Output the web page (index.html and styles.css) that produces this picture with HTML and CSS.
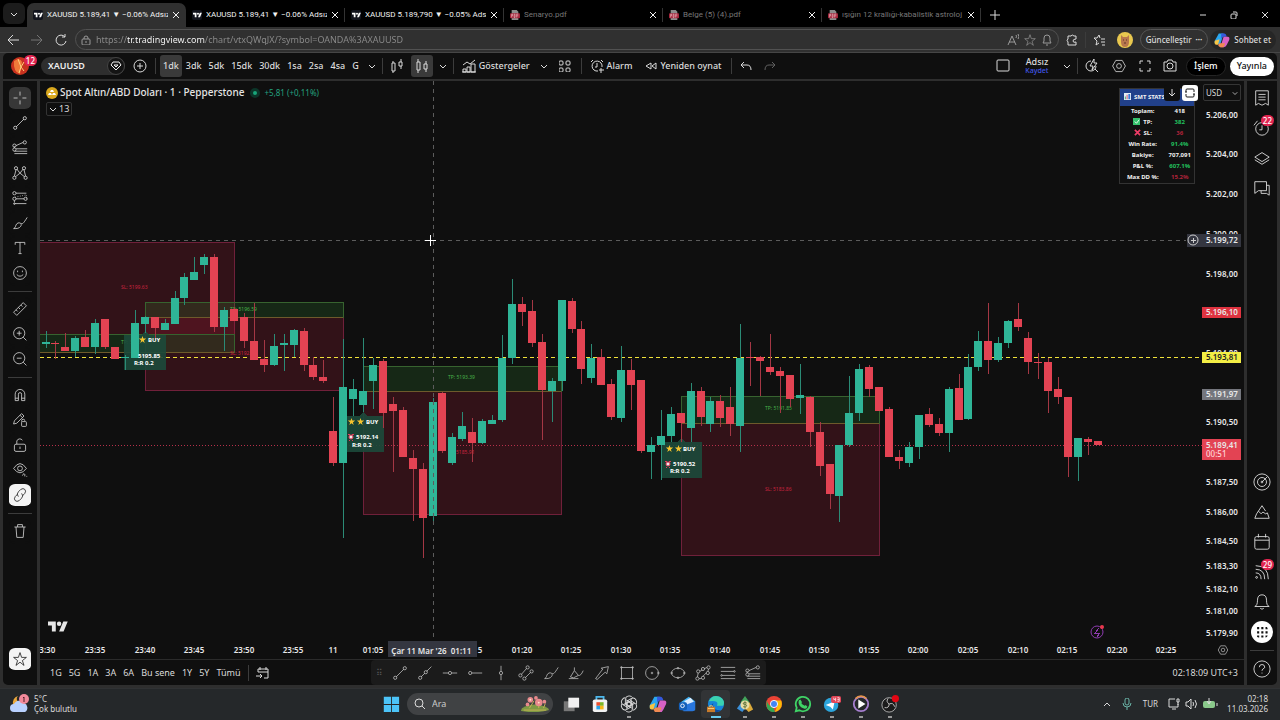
FILE: index.html
```html
<!DOCTYPE html>
<html lang="tr">
<head>
    <meta charset="utf-8">
    <meta name="viewport" content="width=device-width, initial-scale=1.0">
    <title>XAUUSD 5.189,41 ▼ −0.06% Adsız</title>
    <link rel="stylesheet" href="styles.css">
</head>
<body>
    <svg class="sprite" aria-hidden="true">
        <symbol id="tv" viewBox="0 0 36 22"><path fill="currentColor" d="M14 20H7V9H0V2h14zM28 20h-8l7.500-18h8z"/><circle fill="currentColor" cx="20" cy="6" r="4"/></symbol>
        <symbol id="down" viewBox="0 0 8 8"><path d="M1 3l3 3 3-3"/></symbol>
        <symbol id="x" viewBox="0 0 8 8"><path d="M1 1l6 6M7 1L1 7"/></symbol>
        <symbol id="pdf" viewBox="0 0 12 12"><path fill="#8c8c8c" d="M2 0h6l2 2v10H2z"/><rect fill="#a3263c" y="4" width="12" height="6" rx="1"/><path fill="none" stroke="#e0a0a8" d="M2 9V5h1v2H2M5 5v4h1V5zM8 9V5h2M8 7h2"/></symbol>
        <symbol id="star" viewBox="0 0 20 20"><path d="M10 2l2 6h6l-5 4 2 6-5-4-5 4 2-6-5-4h6z"/></symbol>
        <symbol id="hex" viewBox="0 0 20 20"><path d="M6 3h8l4 7-4 7H6l-4-7z"/><circle cx="10" cy="10" r="3"/></symbol>
        <symbol id="brush" viewBox="0 0 20 20"><path d="M2 17c3-1 2-4 4-6 3-3 7 0 5 3-2 3-5 3-9 3zM11 10c2 2 3 1 8-7"/></symbol>
        <symbol id="line" viewBox="0 0 20 20"><circle cx="4" cy="16" r="2"/><circle cx="16" cy="4" r="2"/><path d="M5 15L15 5"/></symbol>
        <symbol id="fan" viewBox="0 0 20 20"><path d="M5 11h14M3 14h16M3 17h16M5 7l9-4M3 8v2"/><circle cx="3" cy="7" r="2"/><circle cx="16" cy="3" r="2"/><circle cx="3" cy="12" r="2"/></symbol>
        <symbol id="copilot" viewBox="0 0 20 20"><path fill="#2aa7f0" d="M6 2h6l-4 13H3q-3 0-2-4z"/><path fill="#f6c444" d="M1 11l6-2-2 7H3q-3 0-2-5z"/><path fill="#3558dd" d="M9 2h4q2 0 3 4h-4q-2 0-3 3z"/><path fill="#d861c4" d="M12 6h5q3 0 2 4l-3 6q-1 3-4 3H8z"/><path fill="#f08a52" d="M7 14h7l-2 5H8q-2 0-3-3z"/></symbol>
    </svg>

    <div class="tabs">
        <button class="tab-menu" aria-label="Sekme menüsü"><svg class="s8"><use href="#down"/></svg></button>
        <div class="tab active"><span class="fav"><svg><use href="#tv"/></svg></span><a href="#">XAUUSD 5.189,41 ▼ −0.06% Adsız</a><button aria-label="Kapat"><svg class="s8"><use href="#x"/></svg></button></div>
        <div class="tab"><span class="fav"><svg><use href="#tv"/></svg></span><a href="#">XAUUSD 5.189,41 ▼ −0.06% Adsız</a><button aria-label="Kapat"><svg class="s8"><use href="#x"/></svg></button></div>
        <div class="tab"><span class="fav"><svg><use href="#tv"/></svg></span><a href="#">XAUUSD 5.189,790 ▼ −0.05% Adsız</a><button aria-label="Kapat"><svg class="s8"><use href="#x"/></svg></button></div>
        <div class="tab pdf"><svg class="s10"><use href="#pdf"/></svg><a href="#">Senaryo.pdf</a><button aria-label="Kapat"><svg class="s8"><use href="#x"/></svg></button></div>
        <div class="tab pdf"><svg class="s10"><use href="#pdf"/></svg><a href="#">Belge (5) (4).pdf</a><button aria-label="Kapat"><svg class="s8"><use href="#x"/></svg></button></div>
        <div class="tab pdf"><svg class="s10"><use href="#pdf"/></svg><a href="#">ışığın 12 krallığı-kabalistik astroloj</a><button aria-label="Kapat"><svg class="s8"><use href="#x"/></svg></button></div>
        <button class="new-tab" aria-label="Yeni sekme"><svg viewBox="0 0 10 10"><path d="M5 0v10M0 5h10"/></svg></button>
        <div class="window-buttons">
            <button aria-label="Simge durumuna küçült"><svg class="s8" viewBox="0 0 8 8"><path d="M1 4h6"/></svg></button>
            <button aria-label="Önceki boyut"><svg class="s8" viewBox="0 0 8 8"><rect x="1" y="3" width="5" height="5" rx="1"/><path d="M3 1h3q1 0 1 1v3"/></svg></button>
            <button aria-label="Pencereyi kapat"><svg class="s8"><use href="#x"/></svg></button>
        </div>
    </div>

    <div class="address-bar">
        <div class="nav">
            <button aria-label="Geri"><svg viewBox="0 0 12 12"><path d="M12 6H1M6 1L1 6l5 5"/></svg></button>
            <button class="dim" aria-label="İleri"><svg viewBox="0 0 12 12"><path d="M0 6h11M6 1l5 5-5 5"/></svg></button>
            <button aria-label="Yenile"><svg viewBox="0 0 12 12"><path d="M10 3a5 5 0 1 0 1 4M10 0v3H7"/></svg></button>
        </div>
        <div class="url">
            <svg class="s10" viewBox="0 0 10 10"><rect x="1" y="4" width="8" height="6" rx="1"/><path d="M3 4V3a2 2 0 0 1 4 0v1M5 6v2"/></svg>
            <input class="url-input" type="text" aria-label="Adres" value="https://tr.tradingview.com/chart/vtxQWqJX/?symbol=OANDA%3AXAUUSD">
            <button aria-label="Sesli oku"><svg viewBox="0 0 12 12"><path d="M1 11l4-9 4 9M2 8h6M9 1q1 1 0 3M11 0q2 3 0 5"/></svg></button>
            <button aria-label="Sık kullanılanlara ekle"><svg viewBox="1 1 18 18"><use href="#star" width="20" height="20"/></svg></button>
            <button aria-label="Bildirimler"><svg viewBox="0 0 12 12"><path d="M2 9l1-2V4a3 3 0 0 1 6 0v3l1 2zM5 11h2"/></svg></button>
        </div>
        <button aria-label="Uzantılar"><svg viewBox="0 0 12 12"><path d="M2 2h3q1-2 3 0h2v3q-3 0-3 2t3 1v3H2V8q-2-2 0-3z"/></svg></button>
        <i class="sep"></i>
        <button aria-label="Sık kullanılanlar"><svg viewBox="0 0 12 12"><path d="M6 9l-3 2 1-4-3-3h3l2-3 1 3M8 5h4M8 8h4M9 11h3"/></svg></button>
        <button class="profile" aria-label="Profil"><svg viewBox="0 0 16 16"><circle cx="8" cy="8" r="8" fill="#e9c84f"/><path fill="#b8774d" d="M4 3l2 2h4l2-2v7q0 5-4 5t-4-5z"/><path stroke="#5d382b" d="M6 8h1M9 8h1M7 11h2"/></svg></button>
        <button class="update">Güncelleştir <span>•••</span></button>
        <button class="chat"><svg class="s16"><use href="#copilot"/></svg>Sohbet et</button>
    </div>

    <main class="app">
        <header class="top-bar">
            <button class="avatar" aria-label="Hesap"><svg viewBox="0 0 20 20"><circle cx="10" cy="10" r="9" fill="#c8321f"/><path fill="#ef7a3a" d="M4 5q6-4 8 1l-2 12q-7-2-6-13z"/><path stroke="#ffd27a" d="M8 3l3 8-2 6M14 6l-3 5 3 4"/></svg><b class="badge">12</b></button>
            <button class="symbol">XAUUSD<span><svg class="s12" viewBox="0 0 12 12"><path d="M3 2h6l2 3-5 5-5-5zM4 5l2 2 2-2z"/></svg></span></button>
            <button class="ic w30" aria-label="Karşılaştır"><svg class="s14" viewBox="0 0 14 14"><circle cx="7" cy="7" r="6"/><path d="M7 4v6M4 7h6"/></svg></button>
            <i class="sep"></i>
            <div class="intervals">
                <button class="active">1dk</button><button>3dk</button><button>5dk</button><button>15dk</button><button>30dk</button><button>1sa</button><button>2sa</button><button>4sa</button><button>G</button>
            </div>
            <button class="ic w20" aria-label="Zaman aralıkları"><svg class="s8"><use href="#down"/></svg></button>
            <i class="sep"></i>
            <button class="ic w28" aria-label="Mumlar"><svg class="s14" viewBox="0 0 14 14"><path d="M2 4h3v8H2zM3 2v2M3 12v2M9 3h3v4H9zM11 0v3M11 7v3"/></svg></button>
            <button class="ic w22 active" aria-label="Grafik tipi"><svg class="s14" viewBox="0 0 14 14"><path d="M2 3h3v8H2zM3 0v3M3 11v3M9 5h3v5H9zM11 2v3M11 10v3"/></svg></button>
            <button class="ic w20" aria-label="Grafik tipleri"><svg class="s8"><use href="#down"/></svg></button>
            <i class="sep"></i>
            <button class="with-text"><svg class="s14" viewBox="0 0 14 14"><path d="M1 6l4-3 3 2 5-4M1 13v-3h3v3zM5 13V8h3v5zM9 13V5h4v8zM0 13h14"/></svg>Göstergeler</button>
            <button class="ic w28" aria-label="Favori göstergeler"><svg class="s8"><use href="#down"/></svg></button>
            <button class="ic w14" aria-label="Şablonlar"><svg class="s12" viewBox="0 0 12 12"><rect x="0" y="1" width="4" height="4" rx="1"/><rect x="7" y="1" width="4" height="4" rx="1"/><rect x="0" y="8" width="4" height="4" rx="1"/><rect x="7" y="8" width="4" height="4" rx="1"/></svg></button>
            <i class="sep wide"></i>
            <button class="with-text"><svg class="s14" viewBox="0 0 14 14"><path d="M12 8a5 5 0 1 0-4 4M7 4v4H5M1 3l2-2M11 1l2 2M11 9v5M9 11h5"/></svg>Alarm</button>
            <button class="with-text replay"><svg class="s12" viewBox="0 0 12 12"><path d="M6 3v6L1 6zM11 3v6L7 6z"/></svg>Yeniden oynat</button>
            <i class="sep"></i>
            <button class="ic w28" aria-label="Geri al"><svg class="s12" viewBox="0 0 12 12"><path d="M4 2L1 5l3 3M1 5h6q4 0 4 5"/></svg></button>
            <button class="ic w20 dim" aria-label="Yinele"><svg class="s12" viewBox="0 0 12 12"><path d="M8 2l3 3-3 3M11 5H5q-4 0-4 5"/></svg></button>

            <div class="top-right">
                <button class="ic w28" aria-label="Düzen"><svg class="s14" viewBox="0 0 14 14"><rect x="1" y="1" width="12" height="11" rx="1"/></svg></button>
                <button class="layout-name">Adsız<small>Kaydet</small></button>
                <button class="ic w20" aria-label="Düzenler"><svg class="s8"><use href="#down"/></svg></button>
                <i class="sep"></i>
                <button class="ic w28" aria-label="Hızlı arama"><svg class="s14" viewBox="0 0 14 14"><path d="M6 2a5 5 0 1 0 5 5M10 10l3 3M9 0L5 7h3l-1 4 5-7H9z"/></svg></button>
                <button class="ic w26" aria-label="Ayarlar"><svg class="s16"><use href="#hex"/></svg></button>
                <button class="ic w26" aria-label="Tam ekran"><svg class="s14" viewBox="0 0 14 14"><path d="M2 5V2h3M9 2h3v3M12 9v3H9M5 12H2V9"/></svg></button>
                <button class="ic w24" aria-label="Ekran görüntüsü"><svg class="s14" viewBox="0 0 14 14"><path d="M1 3h3l1-2h4l1 2h3v9H1z"/><circle cx="7" cy="7" r="3"/></svg></button>
                <button class="pill dark">İşlem</button>
                <button class="pill light">Yayınla</button>
            </div>
        </header>

        <nav class="left-bar" aria-label="Çizim araçları">
            <button class="on" aria-label="Artı imleç"><svg viewBox="0 0 20 20"><path d="M10 2v5M10 13v5M2 10h5M13 10h5"/></svg></button>
            <button aria-label="Trend çizgisi"><svg><use href="#line"/></svg></button>
            <button aria-label="Fibonacci"><svg><use href="#fan"/></svg></button>
            <button aria-label="Formasyonlar"><svg viewBox="0 0 20 20"><path d="M3 14L5 6M6 5l3 4M11 9l3-4M15 6l2 8M4 15l5-4M11 11l5 4"/><circle cx="3" cy="16" r="2"/><circle cx="5" cy="4" r="2"/><circle cx="10" cy="10" r="1"/><circle cx="15" cy="4" r="2"/><circle cx="17" cy="16" r="2"/></svg></button>
            <button aria-label="Tahmin"><svg viewBox="0 0 20 20"><path d="M5 4h13M5 11h10M3 17h15M3 13v2"/><path stroke-dasharray="1 2" d="M4 9l14-3v5"/><circle cx="3" cy="4" r="2"/><circle cx="3" cy="11" r="2"/><circle cx="17" cy="11" r="2"/><circle cx="3" cy="17" r="1"/></svg></button>
            <button aria-label="Fırça"><svg><use href="#brush"/></svg></button>
            <button aria-label="Metin"><svg viewBox="0 0 20 20"><path d="M4 6V3h12v3M10 3v14M8 17h4"/></svg></button>
            <button aria-label="Simgeler"><svg viewBox="0 0 20 20"><circle cx="10" cy="10" r="8"/><path d="M7 7v2M13 7v2M6 12q4 4 8 0"/></svg></button>
            <hr>
            <button aria-label="Ölç"><svg viewBox="0 0 20 20"><path d="M2 14L14 2l4 4L6 18zM11 5l2 2M8 8l2 2M5 11l2 2"/></svg></button>
            <button aria-label="Yakınlaştır"><svg viewBox="0 0 20 20"><circle cx="9" cy="9" r="7"/><path d="M14 14l4 4M9 6v6M6 9h6"/></svg></button>
            <button aria-label="Uzaklaştır"><svg viewBox="0 0 20 20"><circle cx="9" cy="9" r="7"/><path d="M14 14l4 4M6 9h6"/></svg></button>
            <hr>
            <button aria-label="Mıknatıs"><svg viewBox="0 0 20 20"><path d="M4 17V9a6 6 0 0 1 12 0v8h-4V9a2 2 0 0 0-4 0v8zM4 14h4M12 14h4"/></svg></button>
            <button aria-label="Çizimde kal"><svg viewBox="0 0 20 20"><path d="M2 15l1-4L12 2l3 3-9 9zM10 4l3 3M12 12v-1a2 2 0 0 1 4 0"/><rect x="12" y="12" width="6" height="6" rx="1"/></svg></button>
            <button aria-label="Kilitle"><svg viewBox="0 0 20 20"><rect x="3" y="9" width="14" height="9" rx="2"/><path d="M6 9V5a4 4 0 0 1 7-1M10 12v3"/></svg></button>
            <button aria-label="Gizle"><svg viewBox="0 0 20 20"><path d="M2 8q8-12 16 0-8 11-16 0zM13 17l2-3M16 15v3M19 18h-1"/><circle cx="10" cy="8" r="3"/></svg></button>
            <button class="white" aria-label="Senkronize et"><svg viewBox="0 0 20 20"><path d="M8 12q-3-3 0-6l3-3q3-2 5 0t0 5l-3 3M12 8q3 3 0 6l-3 3q-3 2-5 0t0-5l3-3"/></svg></button>
            <hr>
            <button aria-label="Sil"><svg viewBox="0 0 20 20"><path d="M3 5h14M7 5V2h6v3M5 5l1 13h8l1-13"/></svg></button>
            <button class="white last" aria-label="Favoriler"><svg><use href="#star"/></svg></button>
        </nav>

        <section class="chart">
            <svg class="plot" role="img" aria-label="XAUUSD 1 dakikalık mum grafiği">
                <g transform="translate(-40 -81)">
                    <!-- risk / target zones -->
                    <g class="risk">
                        <rect x="38" y="242" width="196" height="92"/>
                        <rect x="145" y="317" width="198" height="73"/>
                        <rect x="363" y="391" width="198" height="123"/>
                        <rect x="681" y="423" width="198" height="132"/>
                    </g>
                    <g class="target">
                        <rect x="38" y="334" width="196" height="18"/>
                        <rect x="145" y="302" width="198" height="15"/>
                        <rect x="363" y="366" width="198" height="25"/>
                        <rect x="681" y="396" width="198" height="27"/>
                    </g>
                    <path class="entry" d="M40 352h194M145 317h198M363 391h198M681 423h198"/>
                    <g class="zone-text">
                        <text class="sl" x="121" y="289">SL: 5199.63</text>
                        <text class="tp" x="121" y="344">TP: 5196.07</text>
                        <text class="tp" x="230" y="311">TP: 5196.59</text>
                        <text class="sl" x="230" y="355">SL: 5192.16</text>
                        <text class="tp" x="448" y="379">TP: 5193.39</text>
                        <text class="sl" x="448" y="454">SL: 5185.91</text>
                        <text class="tp" x="765" y="410">TP: 5191.85</text>
                        <text class="sl" x="765" y="491">SL: 5183.86</text>
                    </g>
                    <path class="last-price" d="M40 445H1202"/>
                    <path class="level" d="M40 357H1202"/>
                    <g class="signal-box">
                        <path d="M124 335h17l4-4 4 4h17v35h-42z"/>
                        <path d="M342 416h17l4-4 4 4h17v36h-42z"/>
                        <path d="M661 442h16l4-4 4 4h17v36h-41z"/>
                    </g>
                    <g class="clock">
                        <circle cx="351" cy="437" r="2"/><path d="M348 435l2-1M352 434l2 1M349 440h1M352 440h1"/>
                        <circle cx="668" cy="464" r="2"/><path d="M665 462l2-1M669 461l2 1M666 467h1M669 467h1"/>
                    </g>
                    <g id="candles"></g>
                    <g class="signal-text">
                        <text x="148" y="342">BUY</text><text x="138" y="358">5195.85</text><text x="134" y="365">R:R 0.2</text>
                        <text x="366" y="424">BUY</text><text x="356" y="439">5192.14</text><text x="352" y="447">R:R 0.2</text>
                        <text x="683" y="451">BUY</text><text x="673" y="466">5190.52</text><text x="670" y="473">R:R 0.2</text>
                    </g>
                    <g class="gold">
                        <use href="#star" x="138" y="335" width="9" height="9"/>
                        <use href="#star" x="347" y="417" width="9" height="9"/><use href="#star" x="356" y="417" width="9" height="9"/>
                        <use href="#star" x="665" y="444" width="9" height="9"/><use href="#star" x="674" y="444" width="9" height="9"/>
                    </g>

                    <!-- crosshair -->
                    <path class="cross" d="M40 240H1186M433 81V640"/>
                    <path class="cursor" d="M425 240h11M430 235v11"/>
                    <path class="tag-cross" d="M1187 234h15v13h-15z"/>
                    <circle class="ring" cx="1193" cy="240" r="5"/><path class="ring" d="M1191 240h5M1193 238v5"/>
                    <svg x="48" y="620" width="20" height="13" color="#e6e6e6"><use href="#tv"/></svg>
                    <circle class="event" cx="1097" cy="632" r="6"/><path class="event" d="M1099 628l-4 5h5l-3 4"/><circle cx="1102" cy="627" r="2" fill="#e8384d"/>

                    <g class="times">
                        <text x="45" y="653">23:30</text><text x="95" y="653">23:35</text><text x="145" y="653">23:40</text><text x="194" y="653">23:45</text><text x="244" y="653">23:50</text><text x="293" y="653">23:55</text><text x="333" y="653">11</text><text x="373" y="653">01:05</text><text x="472" y="653">01:15</text><text x="522" y="653">01:20</text><text x="571" y="653">01:25</text><text x="621" y="653">01:30</text><text x="670" y="653">01:35</text><text x="720" y="653">01:40</text><text x="770" y="653">01:45</text><text x="819" y="653">01:50</text><text x="869" y="653">01:55</text><text x="918" y="653">02:00</text><text x="968" y="653">02:05</text><text x="1018" y="653">02:10</text><text x="1067" y="653">02:15</text><text x="1117" y="653">02:20</text><text x="1166" y="653">02:25</text>
                        <path class="tag-cross" d="M388 641h89v16h-89z"/>
                        <text x="419" y="654">Çar 11 Mar '26</text><text x="461" y="654">01:11</text>
                    </g>
                </g>
            </svg>

            <svg class="prices" role="img" aria-label="Fiyat ölçeği">
                <g transform="translate(-1202 -81)">
                    <g>
                        <text x="1206" y="118">5.206,00</text><text x="1206" y="157">5.204,00</text><text x="1206" y="197">5.202,00</text><text x="1206" y="237">5.200,00</text><text x="1206" y="277">5.198,00</text><text x="1206" y="356">5.194,00</text><text x="1206" y="425">5.190,50</text><text x="1206" y="485">5.187,50</text><text x="1206" y="515">5.186,00</text><text x="1206" y="544">5.184,50</text><text x="1206" y="569">5.183,30</text><text x="1206" y="592">5.182,10</text><text x="1206" y="614">5.181,00</text><text x="1206" y="636">5.179,90</text>
                    </g>
                    <path class="tag-cross" d="M1202 234h39v13h-39z"/><text x="1206" y="243">5.199,72</text>
                    <path fill="#df3340" d="M1202 307h39v11h-39z"/><text x="1206" y="315">5.196,10</text>
                    <path fill="#f3ee45" d="M1202 352h39v11h-39z"/><text class="black" x="1206" y="360">5.193,81</text>
                    <path fill="#74767d" d="M1202 389h39v11h-39z"/><text x="1206" y="397">5.191,97</text>
                    <path fill="#e34353" d="M1202 439h39v21h-39z"/><text x="1206" y="448">5.189,41</text><text class="timer" x="1206" y="457">00:51</text>
                    <use class="gear" href="#hex" x="1217" y="644" width="12" height="12"/>
                </g>
            </svg>

            <div class="legend">
                <h1><svg class="s12" viewBox="0 0 12 12"><circle cx="6" cy="6" r="6" fill="#d9a81e"/><path fill="#fff" d="M5 3h2l1 2H4zM3 6h2l1 2H2zM7 6h2l1 2H6z"/></svg>Spot Altın/ABD Doları · 1 · Pepperstone <i class="live"></i><span>+5,81 (+0,11%)</span></h1>
                <button><svg class="s8"><use href="#down"/></svg>13</button>
            </div>

            <table class="stats">
                <thead><tr><th colspan="2"><svg viewBox="0 0 8 8"><path fill="#e4edf5" d="M0 0h8v8H0z"/><path fill="#3aa76d" d="M1 4h1v3H1z"/><path fill="#d7435a" d="M3 2h1v5H3z"/><path fill="#3b78d8" d="M5 1h2v6H5z"/></svg>SMT STATS</th></tr></thead>
                <tbody>
                    <tr><th>Toplam:</th><td>418</td></tr>
                    <tr><th><svg viewBox="0 0 8 8"><path fill="#35c16c" d="M0 0h8v8H0z"/><path stroke="#fff" d="M2 4l2 2 3-4"/></svg>TP:</th><td class="up">382</td></tr>
                    <tr><th><svg viewBox="0 0 8 8"><path stroke="#ee3c67" stroke-width="2" d="M1 1l6 6M7 1L1 7"/></svg>SL:</th><td class="down">36</td></tr>
                    <tr><th>Win Rate:</th><td class="up">91.4%</td></tr>
                    <tr><th>Bakiye:</th><td>707,091</td></tr>
                    <tr><th>P&amp;L %:</th><td class="up">607.1%</td></tr>
                    <tr><th>Max DD %:</th><td class="down">15.2%</td></tr>
                </tbody>
            </table>
            <div class="scale-tools">
                <button class="pane" aria-label="Bölmeyi aşağı taşı"><svg class="s8" viewBox="0 0 8 8"><path d="M4 0v7M1 4l3 3 3-3"/></svg></button>
                <button class="pane white" aria-label="Bölmeyi büyüt"><svg class="s10" viewBox="0 0 10 10"><path d="M1 4V2q0-1 1-1h6q1 0 1 1v2M1 6v2q0 1 1 1h6q1 0 1-1V6M0 4h2M8 6h2"/></svg></button>
                <label class="currency"><select aria-label="Para birimi"><option>USD</option></select><svg class="s8"><use href="#down"/></svg></label>
            </div>
        </section>

        <footer class="bottom-bar">
            <div class="ranges">
                <button>1G</button><button>5G</button><button>1A</button><button>3A</button><button>6A</button><button>Bu sene</button><button>1Y</button><button>5Y</button><button>Tümü</button>
                <i class="sep"></i>
                <button class="ic" aria-label="Tarihe git"><svg class="s14" viewBox="0 0 14 14"><path d="M2 6V3h10v9H8M4 1v3M10 1v3M2 6h10M0 10h6M4 8l2 2-2 2"/></svg></button>
            </div>
            <div class="favorites">
                <span class="grip">⠿</span>
                <button aria-label="Trend çizgisi"><svg><use href="#line"/></svg></button>
                <button aria-label="Işın"><svg viewBox="0 0 20 20"><circle cx="4" cy="16" r="2"/><circle cx="11" cy="9" r="2"/><path d="M5 15l5-5M12 8l6-6"/></svg></button>
                <button aria-label="Yatay çizgi"><svg viewBox="0 0 20 20"><circle cx="10" cy="10" r="2"/><path d="M1 10h7M12 10h7"/></svg></button>
                <button aria-label="Yatay ışın"><svg viewBox="0 0 20 20"><circle cx="4" cy="10" r="2"/><path d="M6 10h13"/></svg></button>
                <button aria-label="Dikey çizgi"><svg viewBox="0 0 20 20"><circle cx="10" cy="10" r="2"/><path d="M10 1v7M10 12v7"/></svg></button>
                <button aria-label="Paralel kanal"><svg viewBox="0 0 20 20"><path d="M4 12l7-8M9 16l7-7"/><circle cx="3" cy="13" r="2"/><circle cx="12" cy="3" r="2"/><circle cx="8" cy="17" r="2"/><circle cx="17" cy="8" r="2"/></svg></button>
                <button aria-label="Fırça"><svg><use href="#brush"/></svg></button>
                <button aria-label="Vurgulayıcı"><svg viewBox="0 0 20 20"><path d="M1 17h12M3 15l5-8 5 6-6 3zM8 7V3M13 13q3 1 6-6"/></svg></button>
                <button aria-label="Ok"><svg viewBox="0 0 20 20"><path d="M2 17L11 5l-2-1 9-2-2 9-2-2L4 18z"/></svg></button>
                <button aria-label="Dikdörtgen"><svg viewBox="0 0 20 20"><rect x="3" y="3" width="14" height="14"/><circle cx="3" cy="3" r="1"/><circle cx="17" cy="3" r="1"/><circle cx="3" cy="17" r="1"/><circle cx="17" cy="17" r="1"/></svg></button>
                <button aria-label="Çember"><svg viewBox="0 0 20 20"><circle cx="10" cy="10" r="8"/><circle cx="10" cy="10" r="1"/><circle cx="18" cy="10" r="1"/></svg></button>
                <button aria-label="Elips"><svg viewBox="0 0 20 20"><ellipse cx="10" cy="10" rx="8" ry="6"/><circle cx="10" cy="4" r="1"/><circle cx="10" cy="16" r="1"/><circle cx="2" cy="10" r="1"/><circle cx="18" cy="10" r="1"/></svg></button>
                <button aria-label="Yol"><svg viewBox="0 0 20 20"><path d="M3 15l1-5M6 8l3-2M11 5l4-2M17 5l-1 3M14 10l-4 4M8 17H5"/><circle cx="3" cy="17" r="2"/><circle cx="4" cy="8" r="2"/><circle cx="10" cy="5" r="2"/><circle cx="17" cy="3" r="2"/><circle cx="16" cy="10" r="2"/><circle cx="10" cy="16" r="2"/></svg></button>
                <button aria-label="Fibonacci düzeltmesi"><svg viewBox="0 0 20 20"><path d="M1 3h18M1 8h16M3 13h16M1 17h18"/><circle cx="18" cy="8" r="1"/><circle cx="2" cy="13" r="1"/></svg></button>
                <button aria-label="Fibonacci uzatması"><svg><use href="#fan"/></svg></button>
            </div>
            <button class="utc">02:18:09 UTC+3</button>
        </footer>

        <aside class="right-bar">
            <button aria-label="İzleme listesi"><svg viewBox="0 0 20 20"><path d="M3 2h14v16l-3-2-4 2-4-2-3 2zM6 6h8M6 9h8M6 12h8"/></svg></button>
            <button aria-label="Alarmlar"><svg viewBox="0 0 20 20"><circle cx="10" cy="11" r="7"/><path d="M10 7v5H7M1 7l4-5"/></svg><b class="badge">22</b></button>
            <button aria-label="Nesne ağacı"><svg viewBox="0 0 20 20"><path d="M10 4l8 5-8 5-8-5zM2 12l8 5 8-5"/></svg></button>
            <button aria-label="Sohbetler"><svg viewBox="0 0 20 20"><path d="M2 3h13v10H6l-4 3zM15 7h3v11l-3-2H9v-3"/></svg></button>
            <button class="push" aria-label="Tarayıcılar"><svg viewBox="0 0 20 20"><circle cx="10" cy="10" r="9"/><circle cx="10" cy="10" r="5"/><path d="M10 10l6-6"/><circle cx="10" cy="10" r="1"/></svg></button>
            <button aria-label="Pine"><svg viewBox="0 0 20 20"><path d="M6 9l4-6 4 6M4 12l2-3 3 3 2-2 3 2 2-1M4 12l-2 5h16l-2-6"/></svg></button>
            <button aria-label="Takvim"><svg viewBox="0 0 20 20"><rect x="2" y="4" width="16" height="14" rx="2"/><path d="M2 8h16M6 1v4M14 1v4"/></svg></button>
            <button aria-label="Akışlar"><svg viewBox="0 0 20 20"><circle cx="4" cy="16" r="1"/><path d="M3 11q6 0 6 7M3 7q10 0 10 11M3 3q14 0 14 15"/></svg><b class="badge">29</b></button>
            <button aria-label="Bildirimler"><svg viewBox="0 0 20 20"><path d="M2 15q3-1 3-7 0-6 5-6t5 6q0 6 3 7zM8 17q2 2 4 0"/></svg></button>
            <button class="round" aria-label="Ürünler"><svg viewBox="0 0 20 20"><path d="M3 3h3v3H3zM9 3h3v3H9zM15 3h3v3h-3zM3 9h3v3H3zM9 9h3v3H9zM15 9h3v3h-3zM3 15h3v3H3zM9 15h3v3H9zM15 15h3v3h-3z"/></svg></button>
            <hr>
            <button aria-label="Yardım"><svg viewBox="0 0 20 20"><circle cx="10" cy="10" r="9"/><path d="M7 8q0-3 3-3t3 3q0 1-2 2-1 1-1 2M10 14v1"/></svg></button>
        </aside>
    </main>

    <div class="taskbar">
        <button class="weather">
            <svg viewBox="0 0 20 20"><path fill="#eaa83c" d="M8 2q-3 3 1 7l-6 2q-1-7 5-9z"/><path fill="#b9d1ff" d="M4 18a4 4 0 0 1 0-8 6 6 0 0 1 10-1 5 5 0 0 1 1 9z"/><circle cx="14" cy="5" r="5" fill="#f2899a"/><path stroke="#51202a" d="M13 4l1-1v5"/></svg>
            <span>5°C<br>Çok bulutlu</span>
        </button>
        <div class="apps">
            <button aria-label="Başlat"><svg viewBox="0 0 20 20"><path fill="#4cc4f8" d="M2 2h8v8H2zM11 2h8v8h-8zM2 11h8v8H2zM11 11h8v8h-8z"/></svg></button>
            <label class="search">
                <svg class="s12" viewBox="0 0 12 12"><circle cx="5" cy="5" r="4"/><path d="M8 8l3 3"/></svg>
                <input type="text" placeholder="Ara" aria-label="Ara">
                <svg class="flowers" viewBox="0 0 32 18"><path fill="#7f9a44" d="M2 14q14-8 28 0l1 2q-14 4-30 1z"/><path stroke="#c7b453" d="M4 16h24M10 14l5-8M20 14V6M25 14l2-5"/><g fill="#e88a8d"><circle cx="11" cy="5" r="3"/><circle cx="20" cy="8" r="4"/><circle cx="17" cy="3" r="2"/><circle cx="8" cy="10" r="2"/><circle cx="26" cy="7" r="2"/></g><g fill="#ffe0c7"><circle cx="11" cy="5" r="1"/><circle cx="20" cy="8" r="1"/></g></svg>
            </label>
            <button aria-label="Görev görünümü"><svg viewBox="0 0 20 20"><path fill="#777" d="M2 7h12v11H2z"/><path fill="#f0f0f0" d="M7 3h12v11H7z"/></svg></button>
            <button aria-label="Mağaza"><svg viewBox="0 0 20 20"><path stroke="#4db8ec" stroke-width="2" d="M6 6V2h8v4"/><rect x="2" y="5" width="16" height="14" rx="2" fill="#f2f2f2"/><path fill="#e94f2e" d="M6 8h4v4H6z"/><path fill="#7db728" d="M10 8h4v4h-4z"/><path fill="#26a2e8" d="M6 12h4v4H6z"/><path fill="#f7b718" d="M10 12h4v4h-4z"/></svg></button>
            <button class="running" aria-label="ChatGPT"><svg viewBox="0 0 20 20" stroke="#f1f1f1"><path id="petal" d="M6 11V5q0-4 4-4 3 0 4 2M6 5l6 3v5"/><use href="#petal" transform="rotate(60 10 10)"/><use href="#petal" transform="rotate(120 10 10)"/><use href="#petal" transform="rotate(180 10 10)"/><use href="#petal" transform="rotate(240 10 10)"/><use href="#petal" transform="rotate(300 10 10)"/></svg></button>
            <button aria-label="Copilot"><svg><use href="#copilot"/></svg></button>
            <button aria-label="Outlook"><svg viewBox="0 0 20 20"><path fill="#44b4f5" d="M3 8l9-6 7 5v10H5z"/><path fill="#dceeff" d="M7 7l7-4 4 5-7 5z"/><path fill="#2876dc" d="M6 12l13-5v8q0 3-3 3H6z"/><rect x="1" y="8" width="9" height="9" rx="2" fill="#135fb9"/><circle cx="5" cy="12" r="2" stroke="#fff"/></svg></button>
            <button class="running current" aria-label="Edge"><svg viewBox="0 0 20 20"><circle cx="10" cy="10" r="9" fill="#1686d9"/><path fill="#3bd2b0" d="M2 7q4-8 12-5 7 4 4 10H11q3-7-9-5z"/><path fill="#0d4a9e" d="M7 9q-2 8 8 8-4 4-9 1-4-5 1-9z"/><path fill="#c67a2b" d="M0 13h9v6H0z"/><path stroke="#ffd276" d="M3 13v-1h3v1M1 15h7"/></svg></button>
            <button class="running" aria-label="MetaTrader"><svg viewBox="0 0 20 20"><path fill="#42a45b" d="M10 1l5 7-5 5-5-5z"/><path fill="#3b90d9" d="M1 15l5-7 5 6-4 5z"/><path fill="#dcaa3a" d="M9 14l6-6 4 8-5 3z"/><circle cx="10" cy="11" r="5" fill="#e9dda4"/><path stroke="#59713a" d="M12 9q-4-2-4 1 4 0 4 2-1 2-4 1M10 7v8"/></svg></button>
            <button class="running" aria-label="Chrome"><svg viewBox="0 0 20 20"><circle cx="10" cy="10" r="9" fill="#ea4335"/><path fill="#fbbc05" d="M10 6h8q3 9-7 13l3-8z"/><path fill="#34a853" d="M2 6q1 5 8 9l1 4Q0 19 2 6z"/><circle cx="10" cy="10" r="4" fill="#4285f4" stroke="#fff"/></svg></button>
            <button class="running" aria-label="WhatsApp"><svg viewBox="0 0 20 20"><path stroke="#3fd366" stroke-width="2" d="M2 18l1-4a8 8 0 1 1 3 3z"/><path fill="#3fd366" d="M7 5l2 3-1 1q1 2 4 3l1-1 2 2q-1 3-4 2-6-2-6-7 0-3 2-3z"/></svg></button>
            <button class="running" aria-label="Telegram"><svg viewBox="0 0 20 20"><circle cx="9" cy="11" r="8" fill="#2ca5dc"/><path fill="#fff" d="M3 11l10-4-2 9-3-3z"/><rect x="9" y="1" width="11" height="8" rx="2" fill="#df4658"/><path stroke="#ffd5d9" d="M12 3v2h2M14 3v4M16 3h2v4h-2M16 5h2"/></svg></button>
            <button class="running" aria-label="Oynatıcı"><svg viewBox="0 0 20 20"><circle cx="10" cy="10" r="8" stroke="#a77fd0" stroke-width="2"/><path stroke="#e6944b" stroke-width="2" d="M4 4a8 8 0 0 1 12 0"/><path fill="#fff" d="M7 5l8 5-8 5z"/></svg></button>
            <button class="running" aria-label="OBS"><svg viewBox="0 0 20 20"><circle cx="9" cy="11" r="8" fill="#1b1b1b" stroke="#b5b5b5"/><path stroke="#ccc" d="M9 10q-4-3-1-6M9 10q5-2 6 3M9 10q0 5-5 4"/><circle cx="16" cy="4" r="4" fill="#e30613"/></svg></button>
        </div>
        <div class="tray">
            <button aria-label="Gizli simgeler"><svg class="s8" viewBox="0 0 8 8"><path d="M1 6l3-3 3 3"/></svg></button>
            <button aria-label="Mikrofon"><svg class="s12 mic" viewBox="0 0 12 12"><rect x="4" y="0" width="4" height="7" rx="2"/><path d="M2 5q0 4 4 4t4-4M6 9v3"/></svg></button>
            <button class="lang">TUR</button>
            <button class="status" aria-label="Ağ, ses ve pil">
                <svg class="s12" viewBox="0 0 12 12"><path d="M7 1H1v8h9V6M4 11h4M9 1h2v3H9zM10 4v3"/></svg>
                <svg class="s12" viewBox="0 0 12 12"><path d="M1 4h2l3-3v10L3 8H1zM8 4q1 2 0 4M10 2q3 4 0 8"/></svg>
                <svg class="battery" viewBox="0 0 16 12"><rect x="1" y="3" width="12" height="7" rx="2" fill="#8ac98b"/><path d="M15 5v3M7 0v5M5 3l2 3 2-3"/></svg>
            </button>
            <button class="clock-btn">02:18<br>11.03.2026</button>
        </div>
    </div>

    <script src="chart.js"></script>
</body>
</html>
```

FILE: styles.css
```css
:root {
    --bg: #0f0f0f;
    --frame: #2e2e2e;
    --text: #dbdbdb;
    --up: #2fb597;
    --down: #e34353;
    --ui: "Noto Sans", "Open Sans", sans-serif;
}

* {
    margin: 0;
    padding: 0;
    box-sizing: border-box;
}

body {
    height: 100vh;
    display: grid;
    grid-template-rows: 27px 26px 1fr 32px;
    overflow: hidden;
    background: var(--frame);
    color: var(--text);
    font: 9px/12px var(--ui);
}

button,
input,
select {
    font: inherit;
    color: inherit;
    background: none;
    border: 0;
    outline: 0;
}

button {
    display: flex;
    align-items: center;
    justify-content: center;
    white-space: nowrap;
    flex-shrink: 0;
}

a {
    color: inherit;
    text-decoration: none;
}

svg {
    fill: none;
    stroke: currentColor;
    stroke-width: 1px;
    flex-shrink: 0;
}

svg [fill]:not([stroke]) {
    stroke: none;
}

.sprite {
    position: absolute;
    width: 0;
    height: 0;
}

.s8 { width: 8px; height: 8px; }
.s10 { width: 10px; height: 10px; }
.s12 { width: 12px; height: 12px; }
.s14 { width: 14px; height: 14px; }
.s16 { width: 16px; height: 16px; }

.sep {
    width: 1px;
    height: 16px;
    background: #3c3c3c;
    flex-shrink: 0;
}

.dim {
    opacity: 0.4;
}

.badge {
    position: absolute;
    top: 1px;
    right: -1px;
    min-width: 12px;
    padding: 0 2px;
    border-radius: 6px;
    background: #e0244f;
    color: #fff;
    font-size: 8px;
    font-weight: 500;
    line-height: 11px;
}

/* Browser tabs */
.tabs {
    display: flex;
    align-items: flex-end;
    background: #000;
    font-family: Roboto, "Noto Sans", sans-serif;
    font-size: 8px;
}

.tab-menu {
    width: 22px;
    height: 21px;
    margin: 3px 2px 3px 3px;
    border-radius: 6px;
    background: #1c1c1c;
}

.tab {
    display: flex;
    align-items: center;
    gap: 4px;
    width: 159px;
    height: 24px;
    padding: 0 6px;
    color: #f2f2f2;
    min-width: 0;
}

.tab a {
    flex: 1;
    overflow: hidden;
    white-space: nowrap;
}

.tab.active {
    background: #303030;
    border-radius: 7px 7px 0 0;
}

.tab.pdf a {
    color: #777;
}

.tab + .tab:not(.active) {
    background: linear-gradient(#333, #333) right center / 1px 14px no-repeat;
}

.fav {
    display: grid;
    place-items: center;
    width: 10px;
    height: 10px;
    border-radius: 2px;
    background: #11131c;
    color: #fff;
}

.fav svg {
    width: 9px;
    height: 6px;
}

.new-tab {
    width: 28px;
    height: 24px;
}

.new-tab svg {
    width: 10px;
    height: 10px;
}

.window-buttons {
    display: flex;
    margin-left: auto;
}

.window-buttons button {
    width: 31px;
    height: 24px;
}

/* Address bar */
.address-bar {
    display: flex;
    align-items: center;
    gap: 2px;
    padding: 0 4px 0 0;
    background: #303030;
    border-bottom: 1px solid #464646;
    font-size: 8px;
}

.address-bar svg {
    width: 12px;
    height: 12px;
}

.address-bar > button {
    padding: 0 5px;
}

.nav {
    display: flex;
    gap: 12px;
    padding: 0 6px 0 7px;
}

.url {
    display: flex;
    align-items: center;
    gap: 5px;
    flex: 1;
    height: 21px;
    padding: 0 5px;
    border: 1px solid #515151;
    border-radius: 11px;
    color: #999;
}

.url > .s10 {
    width: 10px;
    height: 10px;
}

.url-input {
    flex: 1;
    min-width: 0;
    height: 16px;
    background: linear-gradient(90deg, #8c8c8c 31px, #fff 31px 109px, #8c8c8c 109px);
    -webkit-background-clip: text;
    background-clip: text;
    color: transparent;
    font-size: 9px;
}

.address-bar .profile svg,
.address-bar .chat svg {
    width: 16px;
    height: 16px;
}

.address-bar .update {
    height: 21px;
    padding: 0 5px;
    gap: 4px;
    border: 1px solid #555;
    border-radius: 11px;
    font-weight: 500;
}

.update span {
    font-size: 6px;
}

.address-bar .chat {
    height: 20px;
    gap: 4px;
    padding: 0 5px 0 4px;
    border-radius: 10px;
    background: #262626;
    font-weight: 500;
}

/* Chart application */
.app {
    display: grid;
    grid-template: 26px 1fr 25px / 34px 1fr 30px;
    grid-template-areas:
        "top top top"
        "left chart right"
        "left bottom right";
    column-gap: 3px;
    min-height: 0;
    margin: 0 3px 3px;
    overflow: hidden;
    border-radius: 5px;
}

.top-bar {
    grid-area: top;
    display: flex;
    align-items: center;
    padding: 0 3px;
    background: var(--bg);
    font-weight: 500;
}

.avatar {
    position: relative;
    width: 30px;
    height: 25px;
    margin-right: 5px;
    padding-right: 3px;
}

.avatar svg {
    width: 20px;
    height: 20px;
}

.symbol {
    justify-content: space-between;
    width: 84px;
    height: 18px;
    padding-left: 7px;
    border-radius: 9px;
    background: #2e2e2e;
    color: #eee;
    font-weight: 600;
}

.symbol span {
    display: grid;
    place-items: center;
    width: 18px;
    height: 18px;
    border: 1px solid #444;
    border-radius: 9px;
    background: #141414;
}

.ic {
    height: 22px;
    border-radius: 3px;
}

.w14 { width: 14px; }
.w20 { width: 20px; }
.w22 { width: 22px; }
.w24 { width: 24px; }
.w26 { width: 26px; }
.w28 { width: 28px; }
.w30 { width: 30px; }

.intervals {
    display: flex;
    gap: 1px;
    padding-left: 4px;
}

.intervals button {
    height: 22px;
    padding: 0 3px;
    border-radius: 3px;
}

.top-bar .active {
    background: #3a3a3a;
}

.with-text {
    gap: 3px;
    height: 22px;
    padding-left: 8px;
}

.replay {
    padding: 0 9px 0 13px;
}

.sep.wide {
    margin: 0 0 0 9px;
}

.top-right {
    display: flex;
    align-items: center;
    margin-left: auto;
}

.layout-name {
    flex-direction: column;
    width: 40px;
    line-height: 10px;
}

.layout-name small {
    color: #4056e8;
    font-size: 7px;
    line-height: 8px;
}

.pill {
    height: 19px;
    margin-left: 4px;
    padding: 0 7px;
    border-radius: 10px;
}

.pill.dark {
    background: #000;
    border: 1px solid #242424;
    color: #fff;
}

.pill.light {
    background: #fff;
    color: #111;
}

/* Side bars */
.left-bar,
.right-bar {
    display: flex;
    flex-direction: column;
    align-items: center;
    margin-top: 2px;
    background: var(--bg);
}

.left-bar {
    grid-area: left;
    padding: 5px 0 13px;
}

.left-bar button {
    width: 22px;
    height: 25px;
    border: solid var(--bg);
    border-width: 1px 0 2px;
    border-radius: 6px;
    background-clip: padding-box;
}

.left-bar svg,
.right-bar svg,
.favorites svg {
    width: 16px;
    height: 16px;
}

.left-bar .on {
    background-color: #373737;
}

.white,
.left-bar .white {
    background-color: #f4f4f4;
    color: #1c1c1c;
}

.left-bar .last {
    margin-top: auto;
}

.left-bar hr,
.right-bar hr {
    width: 24px;
    height: 1px;
    margin: 5px 0;
    border: 0;
    background: #3c3c3c;
}

.right-bar {
    grid-area: right;
    padding: 2px 0 1px;
}

.right-bar button {
    position: relative;
    width: 30px;
    height: 30px;
}

.right-bar svg {
    width: 18px;
    height: 18px;
}

.right-bar .badge {
    top: 2px;
    right: 3px;
}

.right-bar .push {
    margin-top: auto;
}

.right-bar .round svg {
    width: 22px;
    height: 22px;
    padding: 4px;
    border-radius: 11px;
    background: #fff;
    fill: #111;
    stroke: none;
}

.right-bar hr {
    margin: 3px 0;
}

/* Chart */
.chart {
    grid-area: chart;
    position: relative;
    display: grid;
    grid-template-columns: 1fr 42px;
    min-height: 0;
    margin-top: 2px;
    background: var(--bg);
    border-bottom: 1px solid #2b2b2b;
}

.plot,
.prices {
    width: 100%;
    height: 100%;
    overflow: hidden;
}

.plot text,
.prices text {
    fill: #e8e8e8;
    stroke: none;
    font-size: 8px;
    font-weight: 600;
}

.plot path,
.plot rect {
    shape-rendering: crispEdges;
}

.plot .risk rect {
    fill: rgba(190, 30, 60, 0.2);
    stroke: #70203a;
}

.plot .target rect {
    fill: rgba(50, 140, 50, 0.2);
    stroke: #37632f;
}

.plot .entry {
    stroke: #6d5a2b;
}

.plot .zone-text text {
    font-size: 5px;
    font-weight: 400;
}

.plot .zone-text .sl { fill: #c8243f; }
.plot .zone-text .tp { fill: #48b04b; }

.plot .last-price {
    stroke: #b5304a;
    stroke-dasharray: 1 2;
}

.plot .level {
    stroke: #f0e23a;
    stroke-dasharray: 4 3;
}

.signal-box path {
    fill: #1c4a3b;
    fill-opacity: 0.9;
    stroke: none;
}

.plot .signal-text text {
    fill: #fff;
    font-size: 6px;
    font-weight: 700;
}

.gold use {
    fill: #f5c32e;
    stroke: none;
}

.clock {
    fill: #eee;
    stroke: #e5395b;
}

.wick { stroke-width: 1px; }
.body { stroke-width: 8px; }
.rise { stroke: var(--up); }
.fall { stroke: var(--down); }

.wick.rise { stroke: #2b8b76; }
.wick.fall { stroke: #a43744; }

.plot .cross {
    stroke: #5c5c5c;
    stroke-dasharray: 4 4;
}

.plot .cursor {
    stroke: #fff;
}

.tag-cross {
    fill: #343640;
    stroke: none;
}

.ring {
    stroke: #ccc;
}

.event {
    stroke: #8e3bb0;
}

.times text {
    text-anchor: middle;
}

.prices .black { fill: #222; }
.prices .timer { fill: #ffd5d9; font-weight: 500; }

.legend {
    position: absolute;
    top: 5px;
    left: 6px;
}

.legend h1 {
    display: flex;
    align-items: center;
    gap: 2px;
    color: #e4e4e4;
    font-size: 10px;
    font-weight: 500;
    line-height: 13px;
}

.legend h1 span {
    margin-left: 3px;
    color: #24a27f;
    font-size: 8px;
    font-weight: 400;
}

.live {
    width: 10px;
    height: 10px;
    margin-left: 3px;
    border: 3px solid #0c3529;
    border-radius: 5px;
    background: #18a57a;
}

.legend button {
    gap: 2px;
    height: 14px;
    margin-top: 3px;
    padding: 0 2px;
    border: 1px solid #333;
    border-radius: 2px;
}

.stats {
    position: absolute;
    top: 7px;
    right: 49px;
    width: 76px;
    border: 1px solid #333;
    border-collapse: collapse;
    background: #111;
    color: #f1f1f1;
    font-size: 6px;
    line-height: 11px;
    text-align: center;
}

.stats thead th {
    height: 17px;
    padding-left: 4px;
    background: #21408a;
    text-align: left;
}

.stats td {
    width: 29px;
    font-weight: 700;
}

.stats svg {
    width: 7px;
    height: 7px;
    margin-right: 3px;
    vertical-align: -1px;
}

.stats .up { color: #22c05e; }
.stats .down { color: #b0233a; }

.scale-tools {
    position: absolute;
    top: 3px;
    right: 3px;
    display: flex;
    align-items: center;
    gap: 2px;
}

.pane {
    width: 16px;
    height: 16px;
    border-radius: 3px;
    background: #0f0f0f;
}

.pane.white {
    background: #fff;
}

.currency {
    display: flex;
    align-items: center;
    width: 38px;
    height: 17px;
    margin-left: 3px;
    padding: 0 2px;
    border: 1px solid #353535;
    border-radius: 2px;
    font-size: 8px;
}

.currency select {
    flex: 1;
    min-width: 0;
    appearance: none;
}

.currency svg {
    width: 6px;
    height: 6px;
}

/* Bottom bar */
.bottom-bar {
    grid-area: bottom;
    display: grid;
    grid-template-columns: 331px 395px 1fr;
    background: var(--bg);
}

.ranges {
    display: flex;
    align-items: center;
    padding-left: 7px;
}

.ranges button {
    padding: 0 4px 0 3px;
}

.ranges .sep {
    margin: 0 4px 0 3px;
}

.favorites {
    display: flex;
    align-items: center;
    border-radius: 4px;
    background: #1b1b1b;
    color: #bbb;
}

.favorites button {
    flex: 1;
}

.grip {
    width: 16px;
    color: #555;
    text-align: center;
}

.utc {
    justify-self: end;
    padding-right: 6px;
}

/* Windows taskbar */
.taskbar {
    display: grid;
    grid-template-columns: 1fr auto 1fr;
    padding-bottom: 2px;
    background: #25282a;
    border-top: 1px solid #303234;
    font-size: 8px;
    line-height: 10px;
}

.weather {
    justify-self: start;
    gap: 4px;
    padding-left: 10px;
    text-align: left;
}

.weather svg {
    width: 20px;
    height: 20px;
}

.apps {
    display: flex;
    align-items: center;
}

.apps button {
    width: 29px;
    height: 28px;
}

.apps button svg {
    width: 18px;
    height: 18px;
}

.apps .running {
    background: linear-gradient(#999, #999) center bottom / 4px 2px no-repeat;
}

.apps .current {
    border-radius: 4px;
    background: linear-gradient(#67c8ee, #67c8ee) center bottom / 10px 2px no-repeat, #323436;
}

.search {
    display: flex;
    align-items: center;
    gap: 6px;
    width: 146px;
    height: 22px;
    margin: 0 3px 0 2px;
    padding: 0 3px 0 7px;
    border-radius: 11px;
    background: #404244;
    font-size: 9px;
}

.search input {
    flex: 1;
    min-width: 0;
}

.search input::placeholder {
    color: #ccc;
}

.flowers {
    width: 30px;
    height: 17px;
}

.tray {
    display: flex;
    align-items: center;
    justify-content: flex-end;
    padding-right: 12px;
}

.tray button {
    padding: 0 5px;
}

.mic { color: #6bb5a8; }

.tray .status {
    gap: 5px;
    padding: 0 5px;
}

.battery {
    width: 16px;
    height: 12px;
}

.tray .clock-btn {
    padding: 0;
    margin-left: 4px;
    text-align: right;
}
```

FILE: chart.js
```javascript
// high, body top, body bottom, low on the plot's y axis; 1 = rising, 0 = falling
const candles = [
    [331, 342, 344, 348, 1], [341, 343, 344, 359, 0], [333, 347, 351, 351, 0], [336, 338, 351, 357, 1], [330, 337, 347, 347, 0],
    [319, 323, 347, 354, 1], [319, 319, 347, 349, 0], [347, 347, 359, 359, 0], [355, 357, 358, 370, 1], [310, 323, 358, 358, 1],
    [316, 317, 324, 333, 1], [317, 317, 328, 340, 0], [319, 323, 330, 330, 1], [291, 298, 324, 324, 1], [273, 277, 298, 305, 1],
    [257, 272, 280, 280, 1], [254, 257, 265, 274, 1], [254, 257, 327, 332, 0], [307, 310, 327, 351, 1], [307, 309, 321, 321, 0],
    [313, 317, 341, 348, 0], [303, 341, 360, 360, 0], [340, 359, 365, 372, 0], [334, 346, 365, 366, 1], [334, 343, 345, 371, 1],
    [329, 330, 345, 357, 1], [328, 331, 365, 371, 0], [357, 365, 377, 380, 0], [360, 377, 381, 383, 0], [397, 431, 463, 466, 0],
    [339, 387, 463, 538, 1], [379, 389, 399, 416, 1], [338, 391, 405, 412, 1], [358, 365, 381, 409, 1], [359, 361, 413, 428, 0],
    [397, 404, 411, 472, 0], [407, 410, 457, 457, 0], [450, 458, 469, 521, 0], [463, 469, 518, 558, 0], [398, 402, 516, 523, 1],
    [392, 393, 451, 453, 0], [433, 437, 463, 465, 1], [412, 426, 439, 441, 1], [418, 432, 443, 462, 0], [419, 421, 443, 444, 1],
    [415, 420, 424, 424, 1], [335, 358, 420, 422, 1], [279, 304, 358, 364, 1], [297, 304, 312, 326, 0], [300, 311, 343, 347, 0],
    [334, 342, 390, 440, 0], [378, 381, 391, 422, 1], [300, 300, 381, 391, 1], [298, 301, 329, 333, 0], [321, 329, 369, 384, 0],
    [344, 358, 378, 383, 1], [349, 357, 385, 385, 0], [379, 384, 417, 420, 0], [346, 370, 418, 422, 1], [359, 370, 385, 410, 0],
    [380, 380, 451, 453, 0], [437, 445, 452, 479, 1], [410, 436, 445, 480, 1], [407, 414, 436, 442, 1], [413, 413, 423, 442, 0],
    [383, 391, 428, 442, 1], [387, 391, 417, 426, 0], [397, 401, 424, 432, 1], [395, 401, 418, 427, 0], [387, 407, 424, 436, 0],
    [324, 358, 426, 452, 1], [342, 357, 358, 386, 0], [356, 357, 361, 396, 0], [334, 367, 372, 375, 0], [367, 371, 376, 413, 0],
    [375, 375, 399, 407, 0], [364, 395, 398, 414, 1], [396, 397, 432, 447, 0], [422, 432, 466, 476, 0], [464, 464, 494, 509, 0],
    [445, 445, 496, 522, 1], [376, 413, 445, 447, 1], [364, 369, 413, 421, 1], [365, 367, 389, 397, 0], [387, 387, 411, 411, 0],
    [407, 409, 457, 457, 0], [450, 457, 461, 469, 0], [442, 447, 463, 467, 1], [415, 415, 447, 459, 1], [408, 414, 425, 427, 0],
    [418, 424, 433, 436, 0], [387, 389, 433, 452, 1], [374, 388, 420, 420, 0], [354, 367, 419, 420, 1], [331, 341, 367, 371, 1],
    [303, 341, 360, 374, 0], [337, 343, 360, 362, 1], [320, 321, 343, 348, 1], [303, 319, 327, 331, 0], [332, 338, 362, 374, 0],
    [353, 362, 363, 379, 0], [358, 362, 391, 413, 0], [377, 389, 397, 404, 0], [397, 397, 457, 477, 0], [438, 438, 457, 481, 1],
    [437, 439, 442, 455, 0], [441, 441, 445, 445, 0]
];

const firstX = 45.5;
const lastX = 1097.5;
const step = (lastX - firstX) / (candles.length - 1);
const group = document.getElementById('candles');

function addLine(className, x, from, to) {
    const path = document.createElementNS('http://www.w3.org/2000/svg', 'path');
    path.setAttribute('class', className);
    path.setAttribute('d', `M${x} ${from}V${to}`);
    group.appendChild(path);
}

candles.forEach(([high, top, bottom, low, rising], i) => {
    const x = Math.round(firstX + i * step);
    const side = rising ? 'rise' : 'fall';
    addLine('wick ' + side, x, high, low);
    addLine('body ' + side, x, top, bottom);
});
```
